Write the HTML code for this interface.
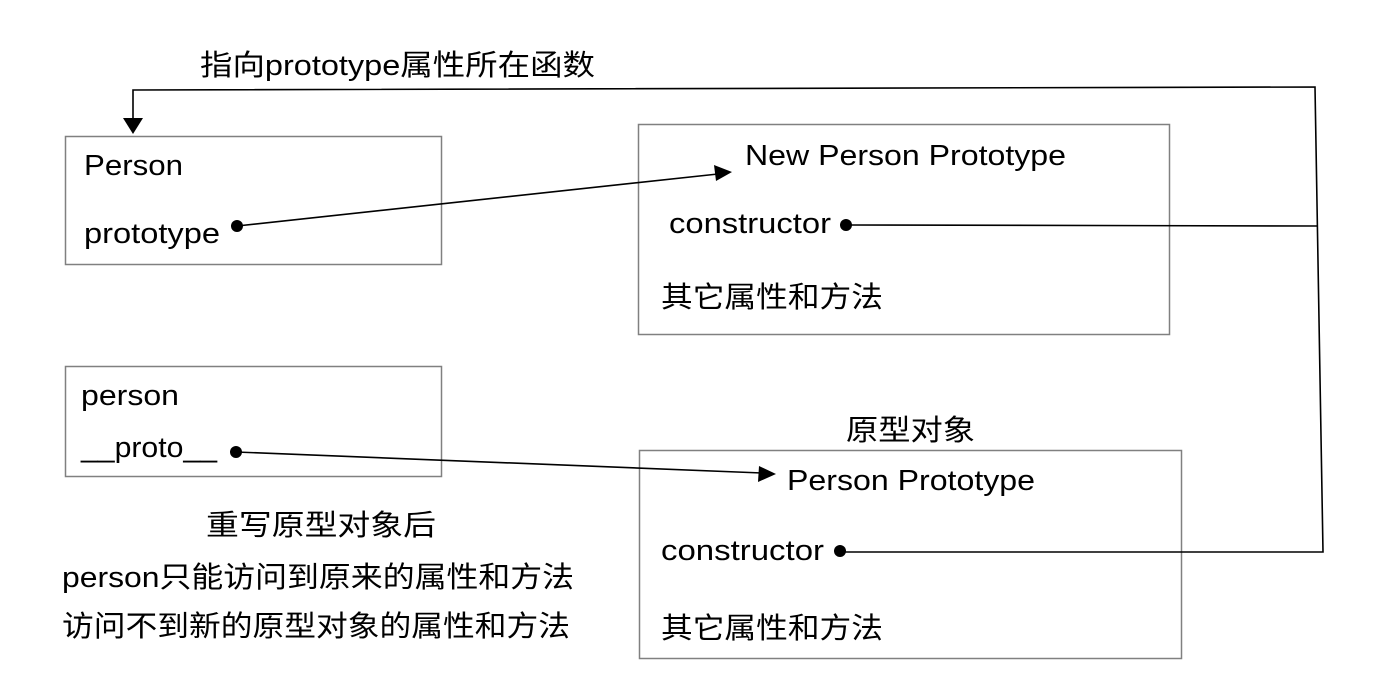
<!DOCTYPE html>
<html><head><meta charset="utf-8"><style>
html,body{margin:0;padding:0;background:#fff;width:1382px;height:698px;overflow:hidden}
text{font-family:"Liberation Sans","Noto Sans CJK SC",sans-serif;font-size:29px;fill:#000}
</style></head><body>
<svg width="1382" height="698" viewBox="0 0 1382 698" xmlns="http://www.w3.org/2000/svg">
<g fill="none" stroke="#808080" stroke-width="1.5">
<rect x="65.5" y="136.5" width="376" height="128"/>
<rect x="638.5" y="124.5" width="531" height="210"/>
<rect x="65.5" y="366.5" width="376" height="110"/>
<rect x="639.5" y="450.5" width="542" height="208"/>
</g>
<g fill="none" stroke="#000" stroke-width="1.6">
<polyline points="845,552 1323,552 1315,87 133,90 133,122"/>
<line x1="846" y1="225" x2="1318" y2="226"/>
<line x1="237" y1="226" x2="718" y2="174"/>
<line x1="236" y1="452" x2="762" y2="473"/>
</g>
<path d="M123,118 L143,118 L133,134 z" fill="#000"/>
<path d="M732,172 L714,165 L716,181 z" fill="#000"/>
<path d="M776,474 L759,466 L758,482 z" fill="#000"/>
<g fill="#000"><circle cx="237" cy="226" r="6"/><circle cx="846" cy="225" r="6"/><circle cx="236" cy="452" r="6"/><circle cx="840" cy="551" r="6"/></g>
<text x="200" y="75" textLength="395" lengthAdjust="spacingAndGlyphs">指向prototype属性所在函数</text>
<text x="84" y="175" textLength="99" lengthAdjust="spacingAndGlyphs">Person</text>
<text x="84" y="243" textLength="136" lengthAdjust="spacingAndGlyphs">prototype</text>
<text x="745" y="165" textLength="321" lengthAdjust="spacingAndGlyphs">New Person Prototype</text>
<text x="669" y="233" textLength="162" lengthAdjust="spacingAndGlyphs">constructor</text>
<text x="661" y="307" textLength="222" lengthAdjust="spacingAndGlyphs">其它属性和方法</text>
<text x="81" y="405" textLength="98" lengthAdjust="spacingAndGlyphs">person</text>
<text x="81" y="457" textLength="136" lengthAdjust="spacingAndGlyphs">__proto__</text>
<text x="846" y="440" textLength="129" lengthAdjust="spacingAndGlyphs">原型对象</text>
<text x="787" y="490" textLength="248" lengthAdjust="spacingAndGlyphs">Person Prototype</text>
<text x="661" y="560" textLength="163" lengthAdjust="spacingAndGlyphs">constructor</text>
<text x="661" y="638" textLength="222" lengthAdjust="spacingAndGlyphs">其它属性和方法</text>
<text x="206" y="535" textLength="230" lengthAdjust="spacingAndGlyphs">重写原型对象后</text>
<text x="62" y="587" textLength="512" lengthAdjust="spacingAndGlyphs">person只能访问到原来的属性和方法</text>
<text x="62" y="636" textLength="508" lengthAdjust="spacingAndGlyphs">访问不到新的原型对象的属性和方法</text>
</svg>
</body></html>
